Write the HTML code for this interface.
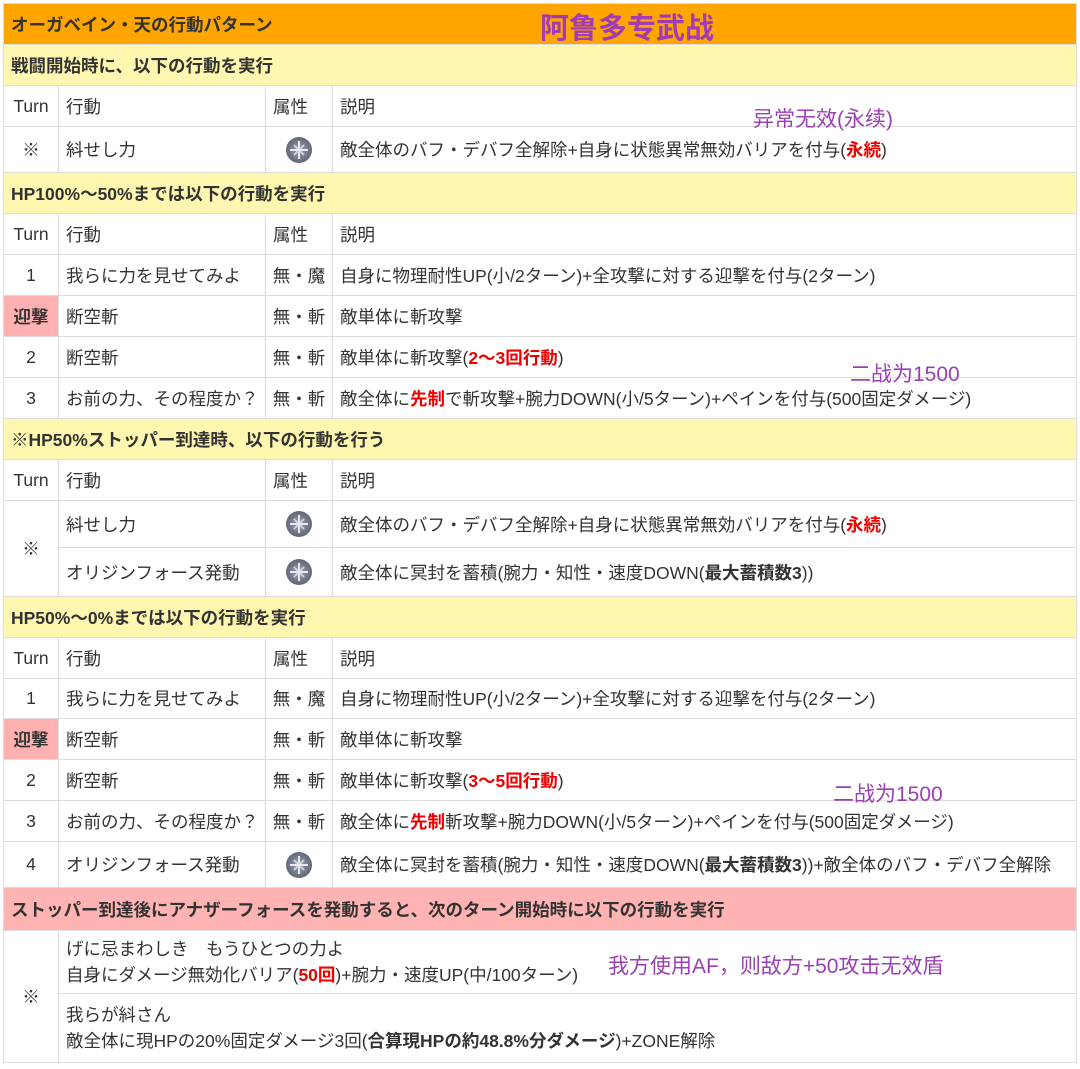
<!DOCTYPE html>
<html><head><meta charset="utf-8"><style>
body{margin:0;background:#fff;width:1080px;height:1069px;position:relative;font-family:"Liberation Sans","Noto Sans CJK JP",sans-serif;font-size:17.5px;color:#333;}
table{position:absolute;left:3px;top:3px;width:1074px;border-collapse:collapse;table-layout:fixed;}
td{border:1px solid #ddd;padding:0 7px;white-space:nowrap;overflow:hidden;}
.h{background:#ffa500;font-weight:bold;height:40px;}
.s{background:#fff7b0;font-weight:bold;height:40px;}
.p{background:#ffb3b3;font-weight:bold;height:42px;}
.c{text-align:center;padding:0;}
.g{background:#ffb0b0;font-weight:bold;text-align:center;padding:0;}
.r{color:#e00;font-weight:bold;}
b{font-weight:bold;}
.ic{display:inline-block;width:26px;height:26px;border-radius:50%;background:radial-gradient(circle,#9aa0ad 0,#6a7080 60%,#4a5060 100%);vertical-align:middle;position:relative;}
.ic:before,.ic:after{content:"";position:absolute;left:12px;top:4px;width:2px;height:18px;background:#e8eaf0;}
.ic:after{transform:rotate(90deg);}
.ic i{position:absolute;left:12px;top:6px;width:2px;height:14px;background:#d0d4dc;transform:rotate(45deg);}
.ic i+i{transform:rotate(-45deg);}
.a{position:absolute;color:#9b3fb5;font-size:21px;white-space:nowrap;}
</style></head><body>
<table>
<colgroup><col style="width:55px"><col style="width:207px"><col style="width:67px"><col></colgroup>
<tr><td class="h" colspan="4">オーガベイン・天の行動パターン</td></tr>
<tr><td class="s" colspan="4">戦闘開始時に、以下の行動を実行</td></tr>
<tr style="height:41px"><td class="c">Turn</td><td>行動</td><td>属性</td><td>説明</td></tr>
<tr style="height:46px"><td class="c">※</td><td>紏せし力</td><td class="c"><span class="ic"><i></i><i></i></span></td><td>敵全体のバフ・デバフ全解除+自身に状態異常無効バリアを付与(<span class="r">永続</span>)</td></tr>
<tr><td class="s" colspan="4">HP100%～50%までは以下の行動を実行</td></tr>
<tr style="height:41px"><td class="c">Turn</td><td>行動</td><td>属性</td><td>説明</td></tr>
<tr style="height:41px"><td class="c">1</td><td>我らに力を見せてみよ</td><td class="c">無・魔</td><td>自身に物理耐性UP(小/2ターン)+全攻撃に対する迎撃を付与(2ターン)</td></tr>
<tr style="height:41px"><td class="g">迎撃</td><td>断空斬</td><td class="c">無・斬</td><td>敵単体に斬攻撃</td></tr>
<tr style="height:41px"><td class="c">2</td><td>断空斬</td><td class="c">無・斬</td><td>敵単体に斬攻撃(<span class="r">2～3回行動</span>)</td></tr>
<tr style="height:41px"><td class="c">3</td><td>お前の力、その程度か？</td><td class="c">無・斬</td><td>敵全体に<span class="r">先制</span>で斬攻撃+腕力DOWN(小/5ターン)+ペインを付与(500固定ダメージ)</td></tr>
<tr><td class="s" colspan="4">※HP50%ストッパー到達時、以下の行動を行う</td></tr>
<tr style="height:41px"><td class="c">Turn</td><td>行動</td><td>属性</td><td>説明</td></tr>
<tr style="height:47px"><td class="c" rowspan="2">※</td><td>紏せし力</td><td class="c"><span class="ic"><i></i><i></i></span></td><td>敵全体のバフ・デバフ全解除+自身に状態異常無効バリアを付与(<span class="r">永続</span>)</td></tr>
<tr style="height:49px"><td>オリジンフォース発動</td><td class="c"><span class="ic"><i></i><i></i></span></td><td>敵全体に冥封を蓄積(腕力・知性・速度DOWN(<b>最大蓄積数3</b>))</td></tr>
<tr><td class="s" colspan="4">HP50%～0%までは以下の行動を実行</td></tr>
<tr style="height:41px"><td class="c">Turn</td><td>行動</td><td>属性</td><td>説明</td></tr>
<tr style="height:40px"><td class="c">1</td><td>我らに力を見せてみよ</td><td class="c">無・魔</td><td>自身に物理耐性UP(小/2ターン)+全攻撃に対する迎撃を付与(2ターン)</td></tr>
<tr style="height:41px"><td class="g">迎撃</td><td>断空斬</td><td class="c">無・斬</td><td>敵単体に斬攻撃</td></tr>
<tr style="height:41px"><td class="c">2</td><td>断空斬</td><td class="c">無・斬</td><td>敵単体に斬攻撃(<span class="r">3～5回行動</span>)</td></tr>
<tr style="height:41px"><td class="c">3</td><td>お前の力、その程度か？</td><td class="c">無・斬</td><td>敵全体に<span class="r">先制</span>斬攻撃+腕力DOWN(小/5ターン)+ペインを付与(500固定ダメージ)</td></tr>
<tr style="height:46px"><td class="c">4</td><td>オリジンフォース発動</td><td class="c"><span class="ic"><i></i><i></i></span></td><td>敵全体に冥封を蓄積(腕力・知性・速度DOWN(<b>最大蓄積数3</b>))+敵全体のバフ・デバフ全解除</td></tr>
<tr><td class="p" colspan="4">ストッパー到達後にアナザーフォースを発動すると、次のターン開始時に以下の行動を実行</td></tr>
<tr style="height:63px"><td class="c" rowspan="2">※</td><td colspan="3" style="line-height:26px">げに忌まわしき　もうひとつの力よ<br>自身にダメージ無効化バリア(<span class="r">50回</span>)+腕力・速度UP(中/100ターン)</td></tr>
<tr style="height:69px"><td colspan="3" style="line-height:26px">我らが紏さん<br>敵全体に現HPの20%固定ダメージ3回(<b>合算現HPの約48.8%分ダメージ</b>)+ZONE解除</td></tr>
</table>
<div class="a" style="left:540px;top:5px;font-size:29px;font-weight:bold;color:#a23bb5">阿鲁多专武战</div>
<div class="a" style="left:753px;top:103px">异常无效(永续)</div>
<div class="a" style="left:850px;top:358px">二战为1500</div>
<div class="a" style="left:833px;top:778px">二战为1500</div>
<div class="a" style="left:608px;top:950px">我方使用AF，则敌方+50攻击无效盾</div>
</body></html>
